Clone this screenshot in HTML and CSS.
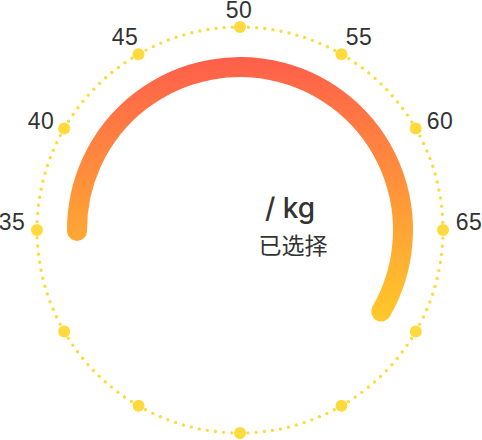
FILE: index.html
```html
<!DOCTYPE html>
<html lang="zh-CN">
<head>
    <meta charset="UTF-8">
    <meta name="viewport" content="width=device-width, initial-scale=1.0">
    <title>体重选择</title>
    <link rel="stylesheet" href="styles.css">
</head>
<body>
    <div id="painel">
        <svg class="mostrador" width="482" height="440" viewBox="0 0 482 440">
            <defs>
                <linearGradient id="grad-arco" gradientUnits="userSpaceOnUse" x1="0" y1="57" x2="0" y2="320">
                    <stop offset="0" stop-color="#ff5e4b"/>
                    <stop offset="1" stop-color="#ffc929"/>
                </linearGradient>
            </defs>

            <!-- pontinhos da escala -->
            <circle class="pontos" cx="240" cy="230" r="203"/>
            <g class="marcas" id="marcas"></g>

            <!-- arco do valor -->
            <path class="arco" d="M 77 231 A 163 163 0 1 1 381.2 311.5"/>

            <text class="rotulo" x="239" y="18">50</text>
            <text class="rotulo" x="125" y="45">45</text>
            <text class="rotulo" x="359" y="45">55</text>
            <text class="rotulo" x="41" y="129">40</text>
            <text class="rotulo" x="440" y="129">60</text>
            <text class="rotulo" x="12" y="230">35</text>
            <text class="rotulo" x="469" y="230">65</text>

            <text class="valor" x="290" y="218">/ kg</text>
            <text class="legenda" x="293" y="254">已选择</text>
        </svg>
    </div>

    <script>
        const marcas = document.getElementById('marcas');
        for (let i = 0; i < 12; i++) {
            const ang = i * Math.PI / 6; // 30 graus
            const c = document.createElementNS('http://www.w3.org/2000/svg', 'circle');
            c.setAttribute('cx', (240 + 203 * Math.cos(ang)).toFixed(2));
            c.setAttribute('cy', (230 + 203 * Math.sin(ang)).toFixed(2));
            c.setAttribute('r', 6);
            marcas.appendChild(c);
        }
    </script>
</body>
</html>
```

FILE: styles.css
```css
body {
    margin: 0;
    background-color: #ffffff;
    font-family: "Noto Sans", "Noto Sans CJK SC", sans-serif;
}
#painel {
    width: 482px;
    height: 440px;
}
.mostrador {
    display: block;
}
.pontos {
    fill: none;
    stroke: #ffda3c;
    stroke-width: 3.4;
    stroke-linecap: round;
    stroke-dasharray: 0 8.1764;
}
.marcas circle {
    fill: #ffda3c;
}
.arco {
    fill: none;
    stroke: url(#grad-arco);
    stroke-width: 20;
    stroke-linecap: round;
}
.rotulo {
    fill: #333333;
    font-family: "Liberation Sans", Arial, sans-serif;
    font-size: 23px;
    letter-spacing: 0.5px;
    text-anchor: middle;
}
.valor {
    fill: #333333;
    font-family: Inter, "Liberation Sans", sans-serif;
    font-size: 28px;
    font-weight: 500;
    text-anchor: middle;
}
.legenda {
    fill: #333333;
    font-family: "Noto Sans CJK SC", sans-serif;
    font-size: 23px;
    text-anchor: middle;
}
```
